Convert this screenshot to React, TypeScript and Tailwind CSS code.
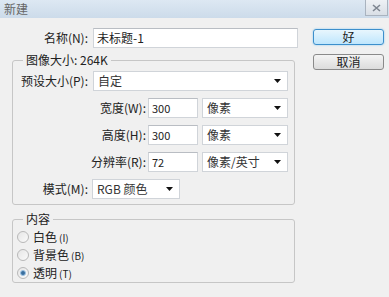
const font = { fontFamily: '"Noto Sans CJK SC", "Noto Sans", sans-serif' }

function Arrow() {
  return (
    <svg width="7" height="4" viewBox="0 0 7 4" className="shrink-0">
      <path d="M0 0H7L3.5 4Z" fill="#111" />
    </svg>
  )
}

function Field({ value, className }: { value: string; className: string }) {
  return (
    <div className={`h-[20px] bg-white border border-[#d0d4d9] border-t-[#b9bdc3] flex items-center px-[3px] text-[11px] text-[#222] ${className}`}>
      {value}
    </div>
  )
}

function Select({ value, className }: { value: string; className: string }) {
  return (
    <div className={`h-[20px] bg-white border border-[#d0d4d9] flex items-center justify-between pl-[4px] pr-[6px] text-[12px] text-[#333] ${className}`}>
      <span>{value}</span>
      <Arrow />
    </div>
  )
}

function Radio({ label, hint, checked }: { label: string; hint: string; checked?: boolean }) {
  return (
    <div className="h-[18px] flex items-center gap-[4px] pl-[4px]">
      <span className="w-[12px] h-[12px] rounded-full border border-[#b8b8b8] bg-gradient-to-br from-[#e6e6e6] to-[#fafafa] flex items-center justify-center">
        {checked && <span className="w-[6px] h-[6px] rounded-full bg-[#3a6f9e] border border-[#9cc3e4]" />}
      </span>
      <span className="text-[12px] text-[#222] leading-none">
        {label}
        <span className="text-[10px] ml-[2px]">{hint}</span>
      </span>
    </div>
  )
}

export default function App() {
  return (
    <div className="w-[389px] h-[297px] bg-[#f0f0f0] overflow-hidden text-[#222]" style={font}>
      <div className="h-[18px] bg-gradient-to-b from-[#dde8f3] to-[#ccdbea] flex items-center justify-between">
        <span className="pl-[4px] text-[12px] text-[#666] leading-none">新建</span>
        <div className="w-[23px] h-[16px] self-start mr-[1px] border border-[#a9b3bf] border-t-0 bg-gradient-to-b from-[#eef1f5] to-[#d9dfe6] flex items-center justify-center">
          <svg width="9" height="8" viewBox="0 0 9 8">
            <path d="M1 1L8 7M8 1L1 7" stroke="#7d8590" strokeWidth="1.6" />
          </svg>
        </div>
      </div>

      <div className="flex pt-[10px]">
        <div className="w-[298px]">
          <div className="h-[20px] flex items-center">
            <span className="w-[88px] text-right text-[12px] leading-none">名称(N):</span>
            <Field value="未标题-1" className="ml-[5px] w-[205px] text-[12px]" />
          </div>

          <fieldset className="mt-[5px] ml-[12px] w-[283px] border border-[#c6c6c6] rounded-[3px] pb-[5px]">
            <legend className="ml-[10px] px-[3px] text-[12px] leading-[14px]">图像大小: 264K</legend>
            <div className="mt-[4px] flex flex-col gap-[7px]">
              <div className="h-[20px] flex items-center">
                <span className="w-[75px] text-right text-[12px] leading-none">预设大小(P):</span>
                <Select value="自定" className="ml-[5px] w-[195px]" />
              </div>
              {[
                ['宽度(W):', '300', '像素'],
                ['高度(H):', '300', '像素'],
                ['分辨率(R):', '72', '像素/英寸'],
              ].map(([label, v, unit]) => (
                <div key={label} className="h-[20px] flex items-center">
                  <span className="w-[133px] text-right text-[12px] leading-none">{label}</span>
                  <Field value={v} className="ml-[2px] w-[50px]" />
                  <Select value={unit} className="ml-[4px] w-[86px]" />
                </div>
              ))}
              <div className="h-[20px] flex items-center">
                <span className="w-[75px] text-right text-[12px] leading-none">模式(M):</span>
                <Select value="RGB 颜色" className="ml-[4px] w-[88px]" />
              </div>
            </div>
          </fieldset>

          <fieldset className="mt-[7px] ml-[12px] w-[283px] border border-[#c6c6c6] rounded-[3px]">
            <legend className="ml-[10px] px-[3px] text-[12px] leading-[14px]">内容</legend>
            <div className="mt-[2px] flex flex-col">
              <Radio label="白色" hint="(I)" />
              <Radio label="背景色" hint="(B)" />
              <Radio label="透明" hint="(T)" checked />
            </div>
          </fieldset>
        </div>

        <div className="ml-[15px] flex flex-col gap-[9px] pt-[1px]">
          <button className="w-[71px] h-[16px] rounded-[3px] border border-[#3c8fcc] bg-gradient-to-b from-[#e8f6fd] to-[#bee6fd] shadow-[0_0_2px_#7fc4f0] text-[12px] leading-none">
            好
          </button>
          <button className="w-[71px] h-[16px] rounded-[3px] border border-[#8a8a8a] bg-gradient-to-b from-[#f4f4f4] to-[#dcdcdc] text-[12px] leading-none">
            取消
          </button>
        </div>
      </div>
    </div>
  )
}
